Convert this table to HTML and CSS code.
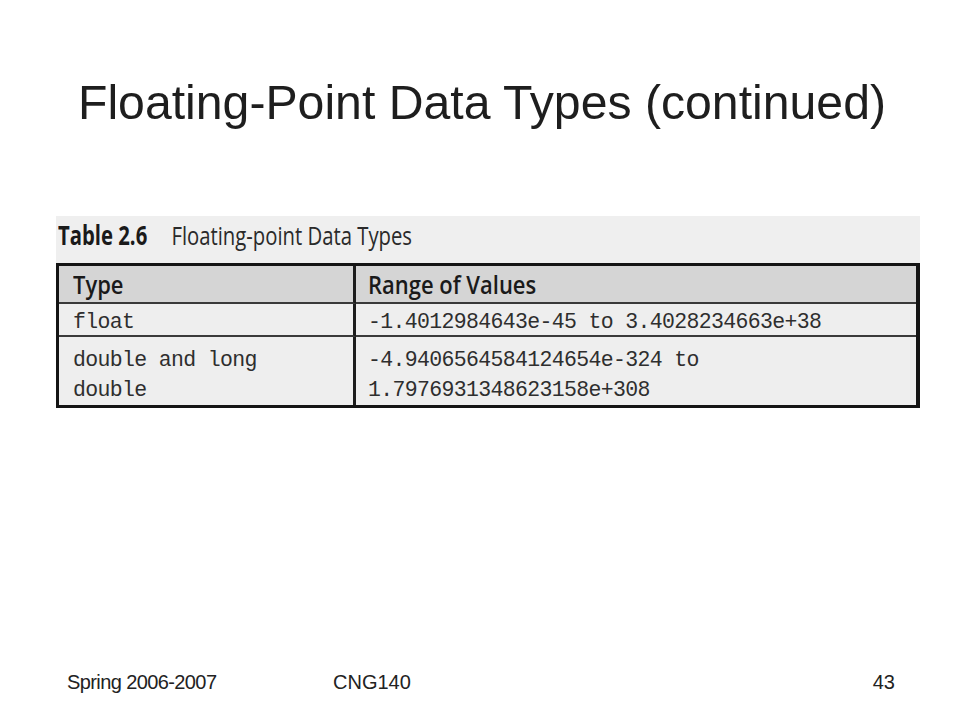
FILE: index.html
```html
<!DOCTYPE html>
<html>
<head>
<meta charset="utf-8">
<link rel="stylesheet" href="styles.css">
</head>
<body>
<div class="slide">
  <h1 class="title">Floating-Point Data Types (continued)</h1>
  <div class="figure">
    <div class="caption"><span class="cap-inner"><b>Table 2.6</b><span class="cap-text">Floating-point Data Types</span></span></div>
    <table class="data">
      <thead>
        <tr><th class="c1"><span class="hd">Type</span></th><th class="c2"><span class="hd">Range of Values</span></th></tr>
      </thead>
      <tbody>
        <tr class="r1"><td class="c1">float</td><td class="c2">-1.4012984643e-45 to 3.4028234663e+38</td></tr>
        <tr class="r2"><td class="c1">double and long<br>double</td><td class="c2">-4.9406564584124654e-324 to<br>1.7976931348623158e+308</td></tr>
      </tbody>
    </table>
  </div>
  <div class="footer">
    <span class="f-left">Spring 2006-2007</span>
    <span class="f-mid">CNG140</span>
    <span class="f-right">43</span>
  </div>
</div>
</body>
</html>
```

FILE: styles.css
```css
html, body { margin: 0; padding: 0; background: #fff; }
.slide {
  width: 960px; height: 720px;
  font-family: "Liberation Sans", Arial, sans-serif; color: #1e1e1e;
  display: flex; flex-direction: column;
}
.title {
  margin: 74px 0 0 0; font-weight: normal; font-size: 48.2px; line-height: 56px;
  text-align: center; padding-left: 4px;
}
.figure {
  margin: 86px 0 0 56px; width: 864px; background: #efefef;
}
.caption {
  height: 34px; padding: 2px 0 11px 2px;
  font-family: "Open Sans", sans-serif; font-size: 26px; line-height: 34px;
  color: #1a1a1a; white-space: nowrap;
}
.cap-inner { display: inline-block; transform: scaleX(0.78); transform-origin: left center; }
.caption b { font-weight: 700; }
.cap-text { margin-left: 31px; color: #2a2a2a; }
.data {
  border-collapse: separate; border-spacing: 0; width: 864px;
  border: 3px solid #141414; border-right-width: 4px;
}
.data th, .data td {
  box-sizing: border-box; text-align: left; vertical-align: top; padding: 0;
}
.data .c1 { width: 297px; border-right: 3px solid #1c1c1c; }
.data th {
  background: #d5d5d5; height: 38px; border-bottom: 2px solid #3a3a3a;
  font-family: "Open Sans", sans-serif; font-weight: 600; font-size: 26px;
  line-height: 36px; color: #1a1a1a; white-space: nowrap;
}
.data th.c1 { padding-left: 14px; }
.data th.c2 { padding-left: 12px; }
.hd { display: inline-block; transform: scaleX(0.845); transform-origin: left center; }
.data td {
  font-family: "Liberation Mono", "Courier New", monospace; font-size: 21.5px;
  letter-spacing: -0.65px; color: #2e2e2e; background: #eeeeee;
}
.data td.c1 { padding-left: 14px; }
.data td.c2 { padding-left: 12px; }
.r1 td { height: 33px; padding-top: 6px; line-height: 25px; border-bottom: 2px solid #3a3a3a; }
.r2 td { height: 68px; padding-top: 8px; line-height: 30px; }
.footer {
  margin-top: auto; margin-bottom: 26px; display: flex; align-items: baseline;
  padding: 0 65px 0 67px; font-size: 20px; line-height: 24px; color: #222;
}
.f-left { width: 266px; letter-spacing: -0.6px; }
.f-right { margin-left: auto; }
```
